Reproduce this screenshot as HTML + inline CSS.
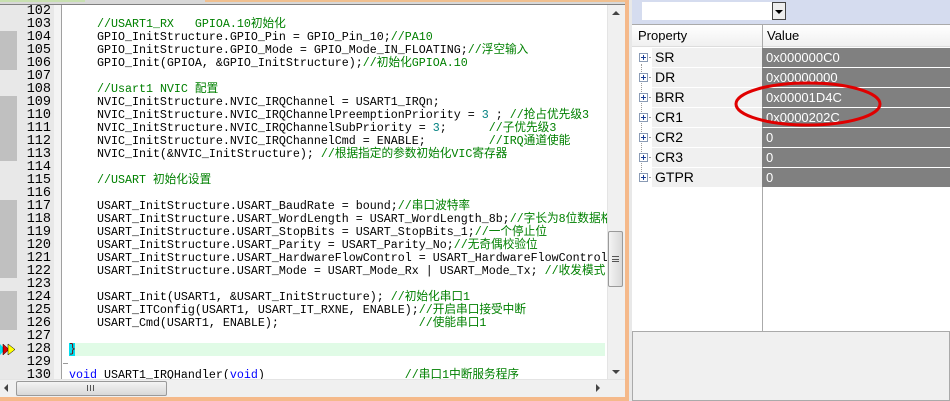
<!DOCTYPE html>
<html><head><meta charset="utf-8"><style>
*{margin:0;padding:0;box-sizing:border-box}
body{width:950px;height:401px;overflow:hidden;background:#fff;position:relative;font-family:"Liberation Sans","Noto Sans CJK SC",sans-serif}
.abs{position:absolute}
.code{position:absolute;left:69px;font-family:"Liberation Mono","Noto Sans CJK SC",monospace;font-size:11.67px;line-height:13px;white-space:pre;color:#000}
.ln{position:absolute;left:18px;width:33px;text-align:right;font-family:"Liberation Mono",monospace;font-size:13.5px;line-height:13px;color:#000}
.c{color:#008000}.n{color:#008080}.k{color:#0000ff}
.c{font-family:"Liberation Mono","Noto Sans CJK SC",monospace}
.row{position:absolute;left:632px;width:318px;height:20px}
.row .p{position:absolute;left:20px;width:110px;top:0;height:19px;background:#f0f0f0;font-size:14px;line-height:19px;padding-left:3px;color:#000}
.row .v{position:absolute;left:130px;width:188px;top:0;height:19px;background:#808080;color:#fff;font-size:13px;line-height:19px;padding-left:4px}
.row .b{position:absolute;left:7px;top:5px;width:9px;height:9px;border:1px solid #8a9bb5;background:#fff}
.row .b:before{content:"";position:absolute;left:1px;top:3px;width:5px;height:1px;background:#1c3f94}
.row .b:after{content:"";position:absolute;left:3px;top:1px;width:1px;height:5px;background:#1c3f94}
.row .d{position:absolute;left:17px;top:9px;width:4px;border-top:1px dotted #999}
</style></head><body>
<div class="abs" style="left:0;top:0;width:626px;height:4px;background:#d8d8d8"></div>
<div class="abs" style="left:0;top:0;width:85px;height:2px;background:#c8e0b0"></div>
<div class="abs" style="left:205px;top:0;width:420px;height:2px;background:#f0c090"></div>
<div class="abs" style="left:0;top:4px;width:626px;height:1px;background:#808080"></div>
<div class="abs" style="left:0;top:5px;width:62px;height:374px;background:#e8e8e8"></div>
<div class="abs" style="left:0;top:31px;width:17px;height:39px;background:#c0c0c0"></div>
<div class="abs" style="left:0;top:96px;width:17px;height:65px;background:#c0c0c0"></div>
<div class="abs" style="left:0;top:200px;width:17px;height:78px;background:#c0c0c0"></div>
<div class="abs" style="left:0;top:291px;width:17px;height:39px;background:#c0c0c0"></div>
<div class="abs" style="left:54px;top:5px;width:7px;height:374px;background:#f4f4f4"></div>
<div class="abs" style="left:61px;top:5px;width:1px;height:374px;background:#a0a0a0"></div>
<svg class="abs" style="left:0;top:343px" width="17" height="13"><polygon points="0,1 5,6.5 0,12" fill="#00e0f0"/><polygon points="3,1 9,6.5 3,12" fill="#e00000" stroke="#000" stroke-width=".5"/><polygon points="8,1 15,6.5 8,12" fill="#ffff00" stroke="#000" stroke-width=".5"/></svg>
<div class="abs" style="left:69px;top:343px;width:536px;height:13px;background:#e0fbe6"></div>
<div class="abs" style="left:69px;top:343px;width:6px;height:13px;background:#00e0f0"></div>
<div class="abs" style="left:63px;top:363px;width:5px;height:1px;background:#999"></div>
<div class="ln" style="top:5px">102<br>103<br>104<br>105<br>106<br>107<br>108<br>109<br>110<br>111<br>112<br>113<br>114<br>115<br>116<br>117<br>118<br>119<br>120<br>121<br>122<br>123<br>124<br>125<br>126<br>127<br>128<br>129<br>130</div>
<div class="abs" style="left:69px;top:5px;width:538px;height:374px;overflow:hidden">
<div class="code" style="left:0;top:0">
    <span class="c">//USART1_RX   GPIOA.10初始化</span>
    GPIO_InitStructure.GPIO_Pin = GPIO_Pin_10;<span class="c">//PA10</span>
    GPIO_InitStructure.GPIO_Mode = GPIO_Mode_IN_FLOATING;<span class="c">//浮空输入</span>
    GPIO_Init(GPIOA, &amp;GPIO_InitStructure);<span class="c">//初始化GPIOA.10</span>

    <span class="c">//Usart1 NVIC 配置</span>
    NVIC_InitStructure.NVIC_IRQChannel = USART1_IRQn;
    NVIC_InitStructure.NVIC_IRQChannelPreemptionPriority = <span class="n">3</span> ; <span class="c">//抢占优先级3</span>
    NVIC_InitStructure.NVIC_IRQChannelSubPriority = <span class="n">3</span>;      <span class="c">//子优先级3</span>
    NVIC_InitStructure.NVIC_IRQChannelCmd = ENABLE;         <span class="c">//IRQ通道使能</span>
    NVIC_Init(&amp;NVIC_InitStructure); <span class="c">//根据指定的参数初始化VIC寄存器</span>

    <span class="c">//USART 初始化设置</span>

    USART_InitStructure.USART_BaudRate = bound;<span class="c">//串口波特率</span>
    USART_InitStructure.USART_WordLength = USART_WordLength_8b;<span class="c">//字长为8位数据格式</span>
    USART_InitStructure.USART_StopBits = USART_StopBits_1;<span class="c">//一个停止位</span>
    USART_InitStructure.USART_Parity = USART_Parity_No;<span class="c">//无奇偶校验位</span>
    USART_InitStructure.USART_HardwareFlowControl = USART_HardwareFlowControl_None;
    USART_InitStructure.USART_Mode = USART_Mode_Rx | USART_Mode_Tx; <span class="c">//收发模式</span>

    USART_Init(USART1, &amp;USART_InitStructure); <span class="c">//初始化串口1</span>
    USART_ITConfig(USART1, USART_IT_RXNE, ENABLE);<span class="c">//开启串口接受中断</span>
    USART_Cmd(USART1, ENABLE);                    <span class="c">//使能串口1</span>

<span style="color:#800000">}</span>

<span class="k">void</span> USART1_IRQHandler(<span class="k">void</span>)                    <span class="c">//串口1中断服务程序</span></div>
</div>
<div class="abs" style="left:607px;top:5px;width:18px;height:374px;background:#f0f0f0;border-left:1px solid #e4e4e4"></div>
<div class="abs" style="left:612px;top:11px;width:0;height:0;border-left:4px solid transparent;border-right:4px solid transparent;border-bottom:4px solid #444"></div>
<div class="abs" style="left:612px;top:370px;width:0;height:0;border-left:4px solid transparent;border-right:4px solid transparent;border-top:4px solid #444"></div>
<div class="abs" style="left:608px;top:231px;width:15px;height:56px;background:linear-gradient(90deg,#f4f4f4,#d8d8d8);border:1px solid #9a9a9a;border-radius:2px"></div>
<div class="abs" style="left:612px;top:256px;width:7px;height:6px;border-top:1px solid #555;border-bottom:1px solid #555"></div>
<div class="abs" style="left:612px;top:259px;width:7px;height:1px;background:#555"></div>
<div class="abs" style="left:0;top:379px;width:626px;height:18px;background:#f0f0f0;border-top:1px solid #e4e4e4"></div>
<div class="abs" style="left:4px;top:384px;width:0;height:0;border-top:4px solid transparent;border-bottom:4px solid transparent;border-right:4px solid #444"></div>
<div class="abs" style="left:596px;top:384px;width:0;height:0;border-top:4px solid transparent;border-bottom:4px solid transparent;border-left:4px solid #444"></div>
<div class="abs" style="left:16px;top:381px;width:151px;height:15px;background:linear-gradient(#f4f4f4,#d8d8d8);border:1px solid #9a9a9a;border-radius:2px"></div>
<div class="abs" style="left:87px;top:385px;width:7px;height:6px;border-left:1px solid #555;border-right:1px solid #555"></div>
<div class="abs" style="left:90px;top:385px;width:1px;height:6px;background:#555"></div>
<div class="abs" style="left:0;top:397px;width:629px;height:4px;background:#f5b98a"></div>
<div class="abs" style="left:625px;top:0;width:4px;height:401px;background:#f5b98a"></div>
<div class="abs" style="left:629px;top:0;width:3px;height:401px;background:#e8e8e8"></div>
<div class="abs" style="left:632px;top:0;width:318px;height:25px;background:#d5dcef"></div>
<div class="abs" style="left:642px;top:2px;width:130px;height:18px;background:#fff"></div>
<div class="abs" style="left:772px;top:2px;width:14px;height:18px;background:#eee;border:1px solid #444"></div>
<div class="abs" style="left:775px;top:10px;width:0;height:0;border-left:4px solid transparent;border-right:4px solid transparent;border-top:4px solid #000"></div>
<div class="abs" style="left:632px;top:24px;width:318px;height:307px;background:#fff;border-top:1px solid #aaa"></div>
<div class="abs" style="left:632px;top:25px;width:318px;height:22px;background:linear-gradient(#fff,#f0f0f0);border-bottom:1px solid #ddd"></div>
<div class="abs" style="left:638px;top:28px;font-size:13px;color:#000">Property</div>
<div class="abs" style="left:767px;top:28px;font-size:13px;color:#000">Value</div>
<div class="abs" style="left:762px;top:25px;width:1px;height:306px;background:#aaa"></div>
<div class="abs" style="left:641px;top:64px;height:118px;border-left:1px dotted #999"></div>
<div class="row" style="top:48px"><div class="b"></div><div class="d"></div><div class="p">SR</div><div class="v">0x000000C0</div></div>
<div class="row" style="top:68px"><div class="b"></div><div class="d"></div><div class="p">DR</div><div class="v">0x00000000</div></div>
<div class="row" style="top:88px"><div class="b"></div><div class="d"></div><div class="p">BRR</div><div class="v">0x00001D4C</div></div>
<div class="row" style="top:108px"><div class="b"></div><div class="d"></div><div class="p">CR1</div><div class="v">0x0000202C</div></div>
<div class="row" style="top:128px"><div class="b"></div><div class="d"></div><div class="p">CR2</div><div class="v">0</div></div>
<div class="row" style="top:148px"><div class="b"></div><div class="d"></div><div class="p">CR3</div><div class="v">0</div></div>
<div class="row" style="top:168px"><div class="b"></div><div class="d"></div><div class="p">GTPR</div><div class="v">0</div></div>
<svg class="abs" style="left:730px;top:80px" width="160" height="50"><ellipse cx="78" cy="24" rx="72" ry="21" fill="none" stroke="#e00000" stroke-width="3"/></svg>
<div class="abs" style="left:632px;top:331px;width:318px;height:70px;background:#f0f0f0;border:1px solid #aaa"></div>
</body></html>
